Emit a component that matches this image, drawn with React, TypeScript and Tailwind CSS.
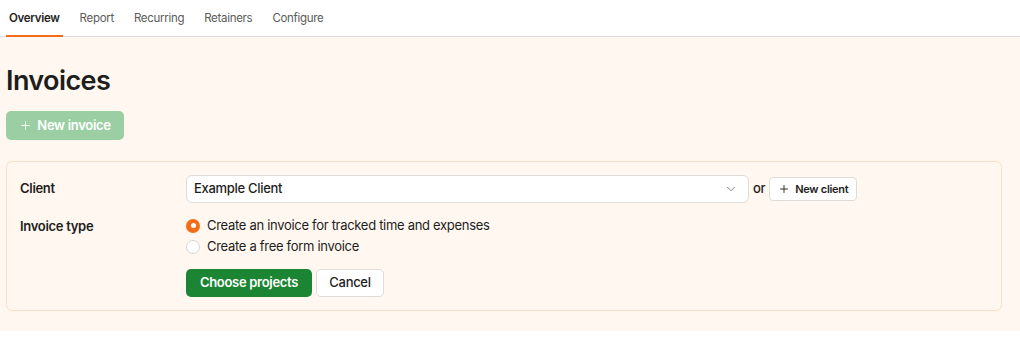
import { ChevronDown, Plus } from "lucide-react";

const tabs = ["Overview", "Report", "Recurring", "Retainers", "Configure"];

function Tabs() {
  return (
    <nav className="flex h-[37px] items-stretch gap-[14px] border-b border-[#dcdcdc] bg-white pl-[6px] tracking-[-0.3px]">
      {tabs.map((t, i) => (
        <a
          key={t}
          className={
            i === 0
              ? "-mb-px flex items-center border-b-2 border-[#f36c17] px-[3px] pt-[2px] text-[11.5px] font-semibold text-[#1d1e1c]"
              : "flex items-center px-[3px] pt-[1px] text-[11.5px] text-[#5b5b58]"
          }
        >
          {t}
        </a>
      ))}
    </nav>
  );
}

function Radio({ checked, label }: { checked?: boolean; label: string }) {
  return (
    <label className="flex h-[21px] items-center gap-[7px] text-[13px] text-[#1d1e1c]">
      {checked ? (
        <span className="flex h-[14px] w-[14px] items-center justify-center rounded-full bg-[#f36c17]">
          <span className="h-[5px] w-[5px] rounded-full bg-white" />
        </span>
      ) : (
        <span className="h-[14px] w-[14px] rounded-full border border-[#d6d6d3] bg-white" />
      )}
      {label}
    </label>
  );
}

export default function App() {
  return (
    <div className="min-h-[353px] bg-white font-['Inter',sans-serif] tracking-[-0.3px] text-[#1d1e1c]">
      <Tabs />
      <main className="bg-[#fff7f0] pb-[20px] pl-[6px] pr-[18px] pt-[26px]">
        <h1 className="text-[27px] font-semibold leading-[36px] tracking-[-0.6px]">Invoices</h1>
        <button className="mt-[12px] flex h-[29px] w-[118px] items-center justify-center gap-[5px] rounded-[5px] bg-[#9bcfa3] text-[13px] font-semibold text-white">
          <Plus size={13} strokeWidth={1.6} />
          New invoice
        </button>

        <section className="mt-[21px] rounded-[6px] border border-[#fbdfc6] px-[13px] pb-[13px] pt-[13px]">
          <div className="flex items-center">
            <div className="w-[166px] text-[13px] font-semibold">Client</div>
            <div className="flex h-[28px] w-[563px] items-center justify-between rounded-[6px] border border-[#dcdcd9] bg-white pl-[7px] pr-[10px] text-[13px] font-medium">
              Example Client
              <ChevronDown size={14} strokeWidth={1.5} className="text-[#6b6b68]" />
            </div>
            <span className="ml-[4px] text-[13px] font-medium">or</span>
            <button className="ml-[4px] flex h-[24px] items-center gap-[5px] rounded-[4px] border border-[#dcdcd9] bg-white px-[8px] text-[11px] font-semibold">
              <Plus size={12} strokeWidth={1.8} />
              New client
            </button>
          </div>

          <div className="mt-[12px] flex">
            <div className="w-[166px] pt-[2px] text-[13px] font-semibold">Invoice type</div>
            <div className="flex flex-col">
              <Radio checked label="Create an invoice for tracked time and expenses" />
              <Radio label="Create a free form invoice" />
              <div className="mt-[12px] flex gap-[4px]">
                <button className="flex h-[28px] w-[126px] items-center justify-center rounded-[5px] bg-[#1b8533] text-[13px] font-semibold text-white">
                  Choose projects
                </button>
                <button className="flex h-[28px] w-[68px] items-center justify-center rounded-[5px] border border-[#dcdcd9] bg-white text-[13px] font-medium">
                  Cancel
                </button>
              </div>
            </div>
          </div>
        </section>
      </main>
    </div>
  );
}
